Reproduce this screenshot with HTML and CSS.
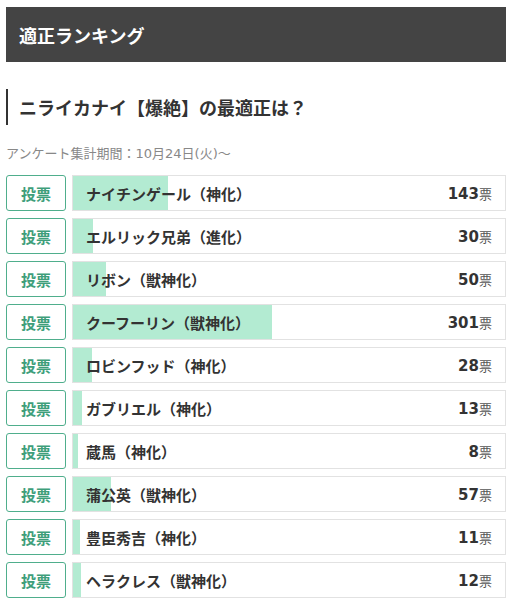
FILE: index.html
```html
<!DOCTYPE html>
<html lang="ja">
<head>
<meta charset="utf-8">
<link rel="stylesheet" href="styles.css">
</head>
<body>
<div class="page">
  <div class="header">適正ランキング</div>
  <h2 class="heading">ニライカナイ【爆絶】の最適正は？</h2>
  <p class="period">アンケート集計期間：10月24日(火)〜</p>
  <ul class="ranking">
    <li class="row"><button class="vote">投票</button><div class="bar"><div class="fill" style="width:21.9%"></div><span class="name">ナイチンゲール（神化）</span><span class="count">143<small>票</small></span></div></li>
    <li class="row"><button class="vote">投票</button><div class="bar"><div class="fill" style="width:4.6%"></div><span class="name">エルリック兄弟（進化）</span><span class="count">30<small>票</small></span></div></li>
    <li class="row"><button class="vote">投票</button><div class="bar"><div class="fill" style="width:7.7%"></div><span class="name">リボン（獣神化）</span><span class="count">50<small>票</small></span></div></li>
    <li class="row"><button class="vote">投票</button><div class="bar"><div class="fill" style="width:46.1%"></div><span class="name">クーフーリン（獣神化）</span><span class="count">301<small>票</small></span></div></li>
    <li class="row"><button class="vote">投票</button><div class="bar"><div class="fill" style="width:4.3%"></div><span class="name">ロビンフッド（神化）</span><span class="count">28<small>票</small></span></div></li>
    <li class="row"><button class="vote">投票</button><div class="bar"><div class="fill" style="width:2%"></div><span class="name">ガブリエル（神化）</span><span class="count">13<small>票</small></span></div></li>
    <li class="row"><button class="vote">投票</button><div class="bar"><div class="fill" style="width:1.2%"></div><span class="name">蔵馬（神化）</span><span class="count">8<small>票</small></span></div></li>
    <li class="row"><button class="vote">投票</button><div class="bar"><div class="fill" style="width:8.7%"></div><span class="name">蒲公英（獣神化）</span><span class="count">57<small>票</small></span></div></li>
    <li class="row"><button class="vote">投票</button><div class="bar"><div class="fill" style="width:1.7%"></div><span class="name">豊臣秀吉（神化）</span><span class="count">11<small>票</small></span></div></li>
    <li class="row"><button class="vote">投票</button><div class="bar"><div class="fill" style="width:1.8%"></div><span class="name">ヘラクレス（獣神化）</span><span class="count">12<small>票</small></span></div></li>
  </ul>
</div>
</body>
</html>
```

FILE: styles.css
```css
* { box-sizing: border-box; }
body {
  margin: 0;
  background: #fff;
  font-family: "DejaVu Sans", "Noto Sans CJK JP", sans-serif;
  color: #333;
}
.page {
  width: 500px;
  margin-left: 6px;
  padding-top: 7px;
}
.header {
  height: 55px;
  background: #444;
  color: #fff;
  font-size: 18px;
  font-weight: bold;
  display: flex;
  align-items: center;
  padding-left: 13px;
}
.heading {
  margin: 27px 0 0;
  height: 36px;
  border-left: 2px solid #333;
  padding-left: 11px;
  font-size: 18px;
  font-weight: bold;
  color: #333;
  display: flex;
  align-items: center;
}
.period {
  margin: 19px 0 0;
  font-size: 13px;
  line-height: 20px;
  color: #888;
}
.ranking {
  list-style: none;
  margin: 11px 0 0;
  padding: 0;
  display: flex;
  flex-direction: column;
  gap: 7px;
}
.row {
  display: flex;
  gap: 6px;
  height: 36px;
}
.vote {
  width: 60px;
  height: 36px;
  flex: none;
  background: #fff;
  border: 1px solid #4fae8c;
  border-radius: 3px;
  color: #3e9e7a;
  font-family: inherit;
  font-size: 15px;
  font-weight: bold;
  padding: 0;
}
.bar {
  flex: 1;
  position: relative;
  border: 1px solid #e2e2e2;
  display: flex;
  align-items: center;
  justify-content: space-between;
  padding: 0 13px 0 13px;
}
.fill {
  position: absolute;
  left: 0;
  top: 0;
  bottom: 0;
  background: #b3ebd2;
}
.name, .count {
  position: relative;
  font-size: 15px;
  font-weight: bold;
  color: #333;
}
.count {
  font-size: 15px;
}
.count small {
  font-size: 13px;
  font-weight: normal;
  color: #555;
}
```
